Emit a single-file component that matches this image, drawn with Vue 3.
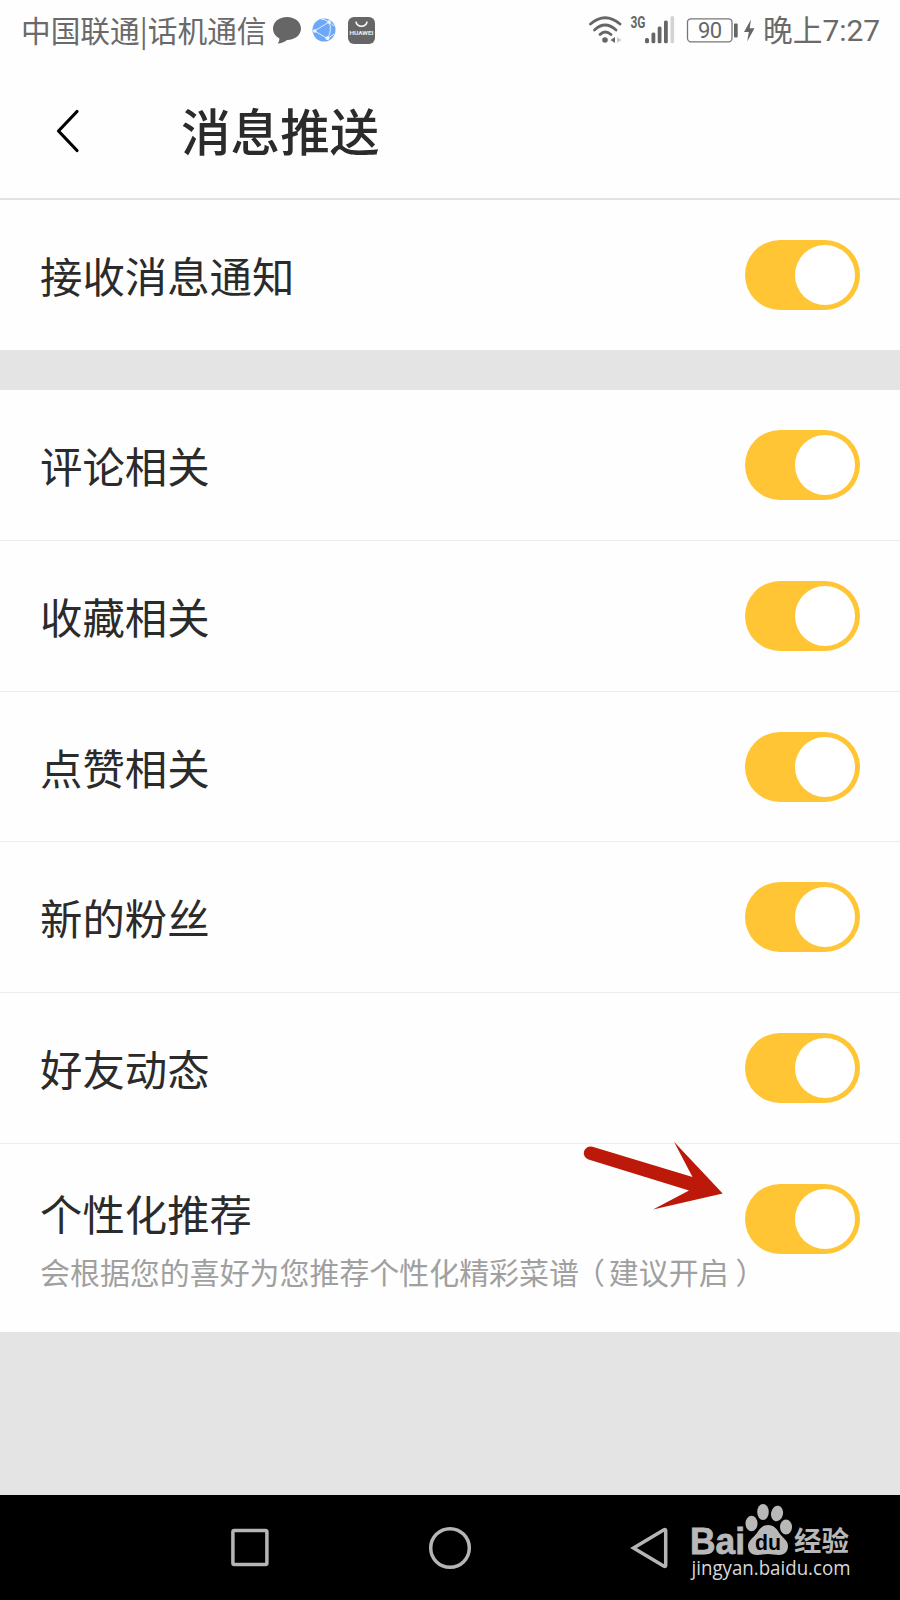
<script setup>
import { reactive } from 'vue';

const mainSetting = reactive({ title: '接收消息通知', on: true });

const settings = reactive([
    { id: 1, title: '评论相关', on: true },
    { id: 2, title: '收藏相关', on: true },
    { id: 3, title: '点赞相关', on: true },
    { id: 4, title: '新的粉丝', on: true },
    { id: 5, title: '好友动态', on: true },
])

const recommend = reactive({ title: '个性化推荐', on: true });

function toggle(item) {
    item.on = !item.on;
}
</script>
<template>
    <div class="page">
        <div class="status-bar">
            <span class="carrier">中国联通|话机通信</span>
            <svg class="bubble" width="30" height="28" viewBox="272 16 30 28">
                <path d="M287 17c8 0 14 5 14 11.5S295 40 287 40c-2.500 2.200-6 3.600-9.500 3.600 1.300-1.400 1.900-3 1.900-5.200-4-2-6.400-5.600-6.400-9.900C273 22 279 17 287 17z" fill="#666" />
            </svg>
            <svg class="globe" width="24" height="24" viewBox="0 0 24 24">
                <circle cx="12" cy="12" r="11.500" fill="#6ca8f7" />
                <path d="M2.500 13L17 4M2.500 13L15.500 20.500M17 4Q20.500 12 15.500 20.500M9 1Q12 1 17 4L22 8M15.500 20.500L22 16" fill="none" stroke="#e4effd" stroke-width="1" />
                <circle cx="2.800" cy="13" r="1.800" fill="#eef5fe" />
                <circle cx="17" cy="4" r="1.800" fill="#eef5fe" />
                <circle cx="15.500" cy="20.200" r="1.900" fill="#eef5fe" />
            </svg>
            <svg class="huawei" width="27" height="27" viewBox="0 0 27 27">
                <rect width="27" height="27" rx="6" fill="#666" />
                <path d="M8 4.500a5.500 4.700 0 0 0 11 0" fill="none" stroke="#fff" stroke-width="1.500" />
                <text x="13.500" y="18" text-anchor="middle" textLength="24" lengthAdjust="spacingAndGlyphs" font-size="6" font-weight="700" fill="#eee">HUAWEI</text>
            </svg>
            <div class="status-right">
                <svg width="174" height="36" viewBox="588 12 174 36" class="signals">
                    <g fill="none" stroke="#666" stroke-width="2.800" stroke-linecap="round">
                        <path d="M590.500 24Q605 11.500 620 24" />
                        <path d="M594.500 30Q605 20 616 30" />
                        <path d="M600 34.500Q605 29.500 611 34.500" />
                    </g>
                    <circle cx="605" cy="40" r="2.800" fill="#666" />
                    <path d="M615 37v6l-4.500-3z" fill="#666" />
                    <path d="M617 37v6l4.500-3z" fill="#ccc" />
                    <text x="630.500" y="28" textLength="15" lengthAdjust="spacingAndGlyphs" font-size="16" font-weight="700" fill="#666">3G</text>
                    <g fill="#666">
                        <rect x="645" y="38" width="4" height="5.300" rx="1.500" />
                        <rect x="651.500" y="32.500" width="3.800" height="10.800" rx="1.500" />
                        <rect x="657.700" y="26.500" width="3.800" height="16.800" rx="1.500" />
                        <rect x="664" y="20.500" width="3.800" height="22.800" rx="1.500" />
                    </g>
                    <rect x="670.500" y="16" width="3.600" height="27.300" rx="1.500" fill="#d3d3d3" />
                    <rect x="687.500" y="18.800" width="44.500" height="23" rx="3.500" fill="none" stroke="#777" stroke-width="1.300" />
                    <rect x="734" y="23.500" width="3.700" height="14" rx="1" fill="#666" />
                    <text x="698" y="38" textLength="24" font-size="22" fill="#666">90</text>
                    <path d="M751 19.500l-7 12.500h4.800l-1.600 9.500 7.300-13.300h-4.800z" fill="#666" />
                </svg>
                <span class="clock">晚上<span class="digits">7:27</span></span>
            </div>
        </div>

        <div class="header">
            <svg class="back" width="26" height="46" viewBox="0 0 26 46">
                <path d="M23 3.500L4.500 23L23 42.500" fill="none" stroke="#000" stroke-width="3.200" stroke-linecap="round" stroke-linejoin="round" />
            </svg>
            <h1>消息推送</h1>
        </div>

        <div class="setting first">
            <span class="label">{{ mainSetting.title }}</span>
            <button @click="toggle(mainSetting)" :class="mainSetting.on ? 'switch on' : 'switch'"><i></i></button>
        </div>

        <div class="setting-list">
            <div v-for="item in settings" class="setting" :key="item.id">
                <span class="label">{{ item.title }}</span>
                <button @click="toggle(item)" :class="item.on ? 'switch on' : 'switch'"><i></i></button>
            </div>
            <div class="setting recommend">
                <div>
                    <span class="label">{{ recommend.title }}</span>
                    <p>会根据您的喜好为您推荐个性化精彩菜谱<span class="open">（</span>建议开启<span class="close">）</span></p>
                </div>
                <button @click="toggle(recommend)" :class="recommend.on ? 'switch on' : 'switch'"><i></i></button>
                <svg class="arrow" width="144" height="74" viewBox="581 1140 144 74">
                    <path d="M592.500 1146.700L692.500 1177L674 1141.800L722.700 1193.500L653 1209.500L689 1190.500L588.500 1159.500A6.600 6.600 0 0 1 592.500 1146.700z" fill="#bd190b" />
                </svg>
            </div>
        </div>

        <div class="nav-bar">
            <svg width="40" height="40" viewBox="0 0 40 40">
                <rect x="2.900" y="2.500" width="34" height="34" rx="1.500" />
            </svg>
            <svg width="44" height="44" viewBox="0 0 44 44">
                <circle cx="22" cy="22" r="19.300" />
            </svg>
            <svg width="40" height="44" viewBox="0 0 40 44">
                <path d="M3.500 22L34 3.800Q35.700 3 35.700 5V39Q35.700 41 34 40.200z" />
            </svg>
        </div>

        <svg class="watermark" width="170" height="84" viewBox="685 1500 170 84" fill="#b8b8b8">
            <text x="690" y="1553.500" textLength="55" lengthAdjust="spacingAndGlyphs" font-size="36" font-weight="700" stroke="#b8b8b8" stroke-width="0.800">Bai</text>
            <ellipse cx="751.500" cy="1523.500" rx="6" ry="7.800" />
            <ellipse cx="763" cy="1512" rx="5.800" ry="8" />
            <ellipse cx="777" cy="1513.500" rx="6" ry="7.800" transform="rotate(12 777 1513.500)" />
            <ellipse cx="786" cy="1527" rx="6" ry="7.600" />
            <path d="M768 1525c6 0 9 4 12 9 4 5 8 7 8 12 0 6-4 9-9 9-4 0-7-1-11-1s-7 1-11 1c-5 0-9-3-9-9 0-5 5-8 9-13 3-5 6-8 11-8z" />
            <text class="du" x="755" y="1550" textLength="26" lengthAdjust="spacingAndGlyphs" font-size="21.500" font-weight="700">du</text>
            <text class="cjk" x="794" y="1551" textLength="55" lengthAdjust="spacingAndGlyphs" font-size="27" font-weight="700">经验</text>
            <text class="url" x="691.500" y="1575" textLength="159" lengthAdjust="spacingAndGlyphs" font-size="19.500" fill="#d8d8d8">jingyan.baidu.com</text>
        </svg>
    </div>
</template>
<style>
body {
    margin: 0;
    background: #e4e4e4;
}
</style>
<style scoped>
.page {
    position: relative;
    width: 900px;
    height: 1600px;
    display: flex;
    flex-direction: column;
    overflow: hidden;
    background: #e4e4e4;
    color: #2b2b2b;
    font-family: "Noto Sans CJK SC", sans-serif;
}

.page > * {
    flex-shrink: 0;
    box-sizing: border-box;
}

.status-bar {
    height: 60px;
    padding: 0 20px 0 21px;
    display: flex;
    align-items: center;
    background: #fefefe;
    color: #6a6a6a;
    font-size: 29.700px;
    line-height: 60px;
    white-space: nowrap;
}

.carrier {
    width: 251px;
}

.globe {
    margin-left: 10px;
}

.huawei {
    margin-left: 12px;
}

.status-bar svg text {
    font-family: Roboto, sans-serif;
}

.status-right {
    margin-left: auto;
    display: flex;
    align-items: center;
}

.signals {
    margin-right: 1px;
}

.clock {
    width: 117px;
}

.digits {
    font-family: Roboto, sans-serif;
    font-size: 30px;
}

.header {
    height: 140px;
    padding: 1px 0 0 54px;
    display: flex;
    border-bottom: 2px solid #e2e2e0;
    background: #fefefe;
}

.back {
    margin-top: 47px;
}

h1 {
    margin: 33px 0 0 101px;
    font-size: 49.600px;
    font-weight: 500;
    line-height: 70px;
}

.setting {
    position: relative;
    box-sizing: border-box;
    height: 150.820px;
    padding: 40px 40px 0;
    display: flex;
    justify-content: space-between;
    border-bottom: 1px solid #ebeeee;
    background: #fefefe;
}

.setting.first {
    height: 150px;
    margin-bottom: 40px;
    border-bottom: none;
}

.label {
    display: block;
    font-size: 42.400px;
    line-height: 69px;
}

.setting.recommend {
    height: 187.600px;
    border-bottom: none;
}

.recommend .label {
    margin-top: -6px;
}

.recommend p {
    margin: 2px 0 0;
    color: #a0a0a0;
    font-size: 29.950px;
    line-height: 44px;
    white-space: nowrap;
}

.open {
    margin: 0 4px 0 -4px;
}

.close {
    margin-left: 7px;
}

.recommend .switch {
    margin-left: -30px;
}

.switch {
    flex-shrink: 0;
    width: 115px;
    height: 70px;
    padding: 5px;
    display: flex;
    border: none;
    border-radius: 35px;
    background: #ccc;
    cursor: pointer;
}

.switch i {
    width: 60px;
    height: 60px;
    border-radius: 50%;
    background: #fff;
}

.switch.on {
    justify-content: flex-end;
    background: #ffc534;
}

/* lies over the row and the line above it */
.arrow {
    position: absolute;
    left: 581px;
    top: -4px;
}

.nav-bar {
    height: 105px;
    margin-top: auto;
    padding-left: 230px;
    display: flex;
    align-items: center;
    background: #000;
}

.nav-bar svg {
    fill: none;
    stroke: #b5b5b5;
    stroke-width: 3.500;
}

.nav-bar svg + svg {
    margin-left: 158px;
}

.watermark {
    position: absolute;
    left: 685px;
    top: 1500px;
    overflow: visible;
    font-family: "Liberation Sans", sans-serif;
}

.watermark .du {
    fill: #000;
}

.watermark .cjk {
    font-family: "Noto Sans CJK SC", sans-serif;
}

.watermark .url {
    font-family: "Open Sans", sans-serif;
}
</style>
